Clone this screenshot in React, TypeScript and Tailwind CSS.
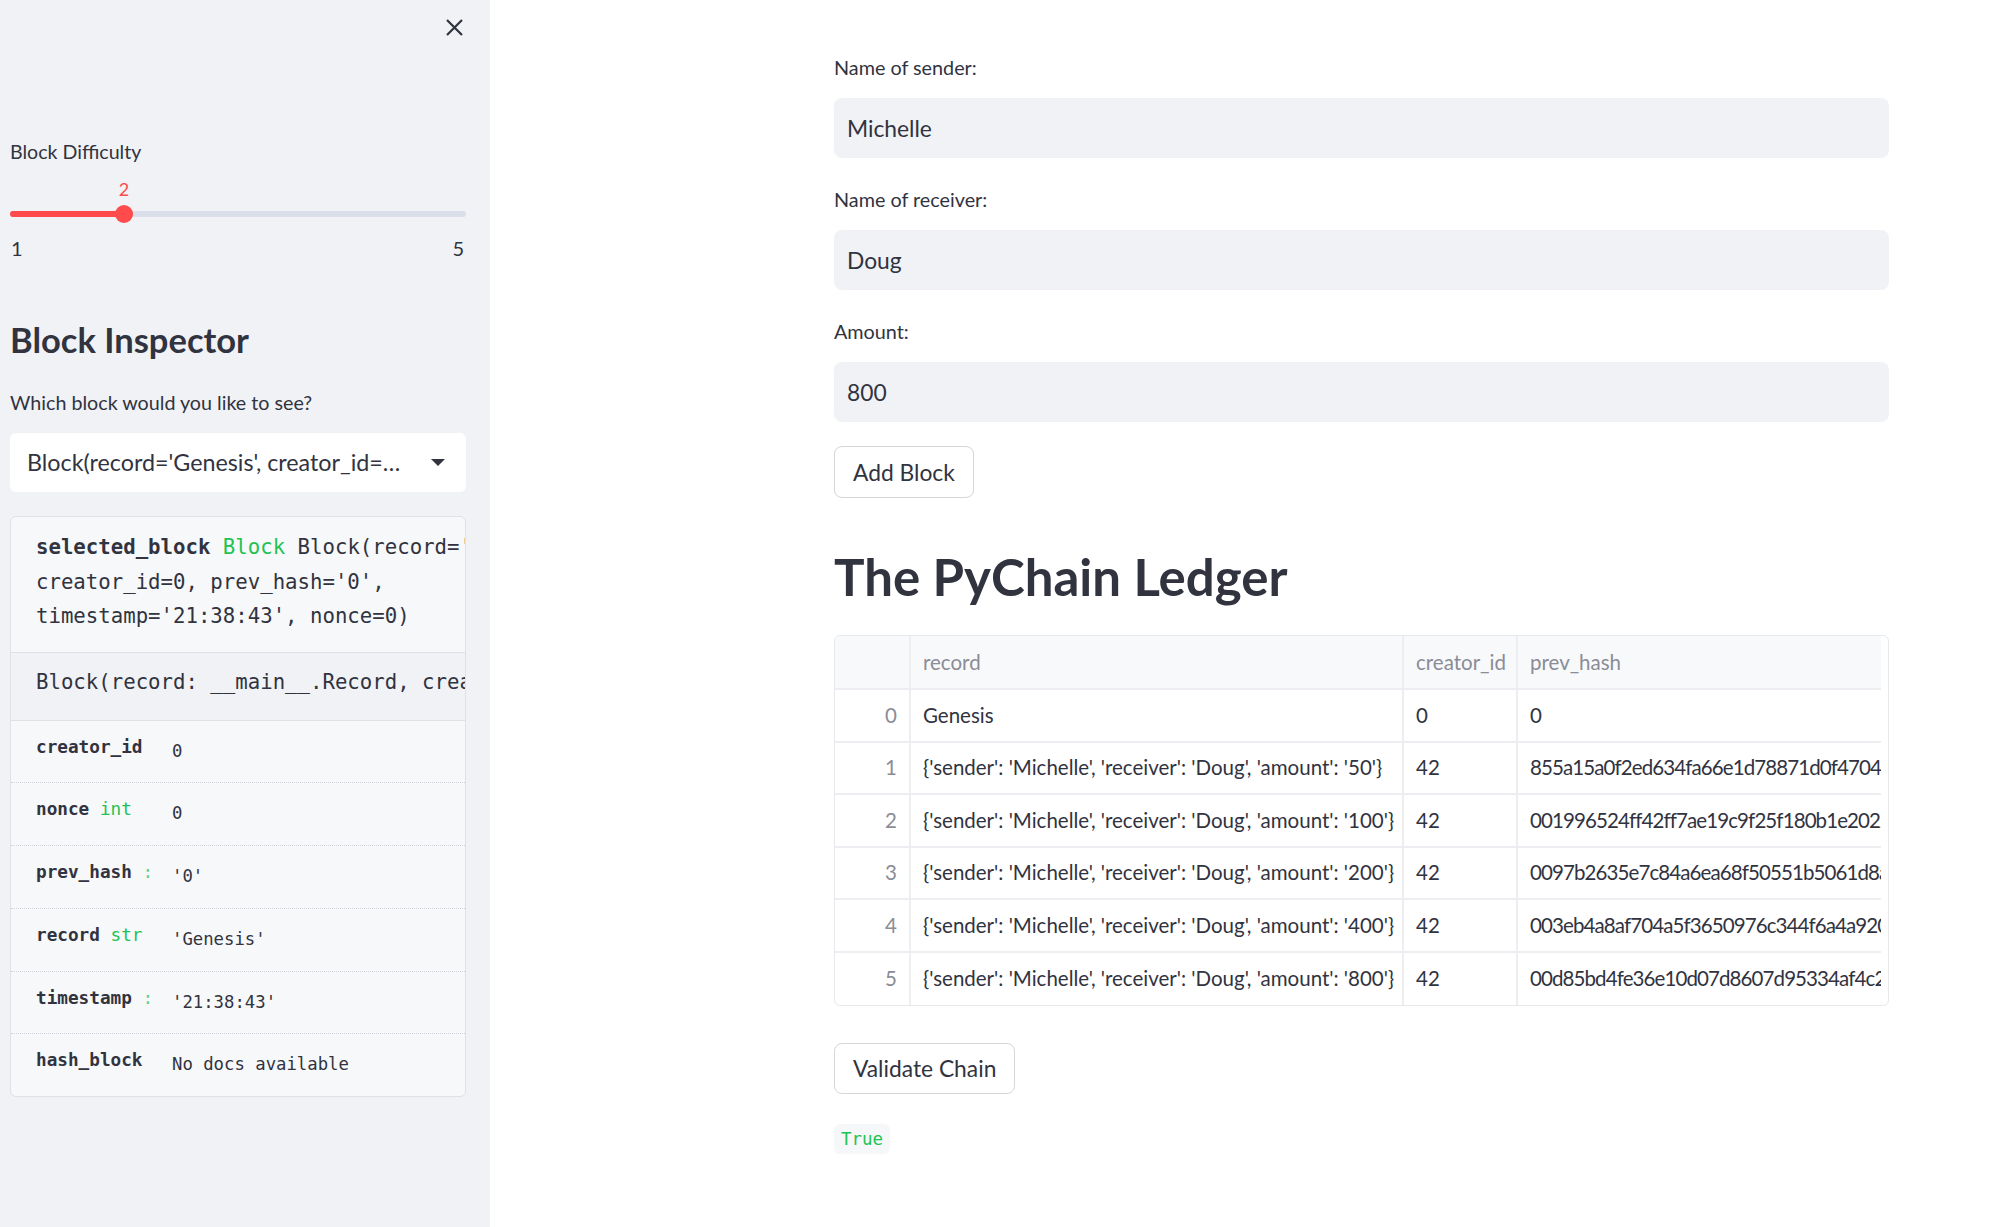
const sans = "font-['Lato',sans-serif]";
const mono = "font-['DejaVu_Sans_Mono',monospace]";

const fields = [
  { label: 'Name of sender:', value: 'Michelle' },
  { label: 'Name of receiver:', value: 'Doug' },
  { label: 'Amount:', value: '800' },
];

const ledger = [
  { id: 0, record: 'Genesis', creator: '0', hash: '0' },
  {
    id: 1,
    record: "{'sender': 'Michelle', 'receiver': 'Doug', 'amount': '50'}",
    creator: '42',
    hash: '855a15a0f2ed634fa66e1d78871d0f4704c9a1e3b2f6',
  },
  {
    id: 2,
    record: "{'sender': 'Michelle', 'receiver': 'Doug', 'amount': '100'}",
    creator: '42',
    hash: '001996524ff42ff7ae19c9f25f180b1e20229d4c7a1b',
  },
  {
    id: 3,
    record: "{'sender': 'Michelle', 'receiver': 'Doug', 'amount': '200'}",
    creator: '42',
    hash: '0097b2635e7c84a6ea68f50551b5061d8a3c2e9f04d7',
  },
  {
    id: 4,
    record: "{'sender': 'Michelle', 'receiver': 'Doug', 'amount': '400'}",
    creator: '42',
    hash: '003eb4a8af704a5f3650976c344f6a4a9201c8e6b5d3',
  },
  {
    id: 5,
    record: "{'sender': 'Michelle', 'receiver': 'Doug', 'amount': '800'}",
    creator: '42',
    hash: '00d85bd4fe36e10d07d8607d95334af4c27b1e0a9f68',
  },
];

const attrs = [
  { name: 'creator_id', type: '', value: '0' },
  { name: 'nonce', type: 'int', value: '0' },
  { name: 'prev_hash', type: ':', value: "'0'" },
  { name: 'record', type: 'str', value: "'Genesis'" },
  { name: 'timestamp', type: ':', value: "'21:38:43'" },
  { name: 'hash_block', type: '', value: 'No docs available' },
];

function Sidebar() {
  return (
    <aside className={`w-[490px] shrink-0 bg-[#f0f2f6] pl-[10px] pr-[24px] text-[#31333f] ${sans}`}>
      <div className="flex justify-end pt-[19px] pr-[3px]">
        <svg width="17" height="17" viewBox="0 0 17 17">
          <path d="M1 1 L16 16 M16 1 L1 16" stroke="#31333f" strokeWidth="2.2" fill="none" />
        </svg>
      </div>

      <div className="mt-[101px] text-[19.6px] leading-[30px]">Block Difficulty</div>

      <div className="relative mt-[13px] h-[44px]">
        <div className="absolute left-[104px] top-0 w-[20px] text-center text-[18px] leading-[18px] text-[#ff4b4b]">2</div>
        <div className="absolute left-0 right-0 top-[31px] h-[6px] rounded-full bg-[#dadfe9]">
          <div className="h-full w-[114px] rounded-full bg-[#ff4b4b]" />
        </div>
        <div className="absolute left-[105px] top-[25px] h-[18px] w-[18px] rounded-full bg-[#ff4b4b]" />
      </div>

      <div className="mt-[9px] flex justify-between text-[20px] leading-[30px]">
        <span className="pl-[1px]">1</span>
        <span className="pr-[2px]">5</span>
      </div>

      <h2 className="mt-[57px] text-[34.5px] font-bold leading-[40px]">Block Inspector</h2>

      <div className="mt-[28px] text-[19.7px] leading-[30px]">Which block would you like to see?</div>

      <div className="mt-[15px] flex h-[59px] items-center justify-between rounded-[6px] bg-white pl-[17px] pr-[21px]">
        <span className="whitespace-nowrap text-[23.3px]">Block(record='Genesis', creator_id=…</span>
        <svg width="14" height="7" viewBox="0 0 14 7">
          <polygon points="0,0 14,0 7,7" fill="#31333f" />
        </svg>
      </div>

      <div className={`mt-[24px] overflow-hidden rounded-[6px] border border-[#dfe1e6] bg-[#f7f8fa] ${mono}`}>
        <div className="whitespace-nowrap pb-[18px] pl-[25px] pt-[13px] text-[20.7px] leading-[34.5px]">
          <div>
            <span className="font-bold">selected_block</span> <span className="text-[#21c354]">Block</span>{' '}
            Block(record='Genesis',
          </div>
          <div>creator_id=0, prev_hash='0',</div>
          <div>timestamp='21:38:43', nonce=0)</div>
        </div>
        <div className="h-[68px] whitespace-nowrap border-t border-[#dfe1e6] bg-[#f0f2f6] pl-[25px] pt-[12px] text-[20.7px] leading-[34.5px]">
          Block(record: __main__.Record, creator_id: int, prev_hash: str = '0')
        </div>
        {attrs.map((a, i) => (
          <div
            key={a.name}
            className={`flex h-[62.8px] pl-[25px] ${i === 0 ? 'border-t border-[#dfe1e6]' : 'border-t border-dotted border-[#cfd2d8]'}`}
          >
            <div className="w-[136px] shrink-0 pt-[13px] text-[17.7px] leading-[26px]">
              <span className="font-bold">{a.name}</span>
              {a.type && (
                <span className={a.type === ':' ? 'text-[#21c354] opacity-70' : 'text-[#21c354]'}> {a.type}</span>
              )}
            </div>
            <div className="pt-[17px] text-[17.3px] leading-[26px]">{a.value}</div>
          </div>
        ))}
      </div>
    </aside>
  );
}

function Main() {
  return (
    <main className={`flex-1 bg-white text-[#31333f] ${sans}`}>
      <div className="ml-[344px] flex w-[1055px] flex-col pt-[52px]">
        {fields.map((f, i) => (
          <div key={f.label} className={i === 0 ? '' : 'mt-[26px]'}>
            <div className="text-[19.8px] leading-[30px]">{f.label}</div>
            <div className="mt-[16px] flex h-[60px] items-center rounded-[8px] bg-[#f0f2f6] pl-[13px] text-[22.8px]">
              {f.value}
            </div>
          </div>
        ))}

        <div className="mt-[24px]">
          <button className="h-[52px] rounded-[8px] border border-[#d6d6d9] bg-white px-[18px] text-[22.8px]">
            Add Block
          </button>
        </div>

        <h1 className="mt-[49px] text-[51px] font-bold leading-[60px]">The PyChain Ledger</h1>

        <div className="mt-[28px] overflow-hidden rounded-[6px] border border-[#e6e8ec] pr-[7px] text-[20.5px]">
          <div className="flex h-[54px] border-b-2 border-[#eceef1] bg-[#f8f9fb] text-[#8a8c96]">
            <div className="w-[76px] shrink-0 border-r-2 border-[#eceef1]" />
            <div className="flex w-[493px] shrink-0 items-center border-r-2 border-[#eceef1] pl-[12px]">record</div>
            <div className="flex w-[114px] shrink-0 items-center border-r-2 border-[#eceef1] pl-[12px]">creator_id</div>
            <div className="flex flex-1 items-center pl-[12px]">prev_hash</div>
          </div>
          {ledger.map((r, i) => (
            <div
              key={r.id}
              className={`flex h-[52.5px] ${i < ledger.length - 1 ? 'border-b-2 border-[#eceef1]' : ''}`}
            >
              <div className="flex w-[76px] shrink-0 items-center justify-end border-r-2 border-[#eceef1] pr-[12px] text-[#8a8c96]">
                {r.id}
              </div>
              <div className="flex w-[493px] shrink-0 items-center overflow-hidden whitespace-nowrap border-r-2 border-[#eceef1] pl-[12px]">
                {r.record}
              </div>
              <div className="flex w-[114px] shrink-0 items-center border-r-2 border-[#eceef1] pl-[12px]">{r.creator}</div>
              <div className="flex min-w-0 flex-1 items-center overflow-hidden whitespace-nowrap pl-[12px] tracking-[-0.9px]">
                {r.hash}
              </div>
            </div>
          ))}
        </div>

        <div className="mt-[37px]">
          <button className="h-[51px] rounded-[8px] border border-[#d6d6d9] bg-white px-[18px] text-[22.8px]">
            Validate Chain
          </button>
        </div>

        <div className="mt-[30px]">
          <span className={`inline-block rounded-[6px] bg-[#f6f7f9] px-[7px] text-[17.5px] leading-[30px] text-[#21c354] ${mono}`}>
            True
          </span>
        </div>
      </div>
    </main>
  );
}

export default function App() {
  return (
    <div className="flex h-[1227px] w-[1993px] overflow-hidden">
      <Sidebar />
      <Main />
    </div>
  );
}
